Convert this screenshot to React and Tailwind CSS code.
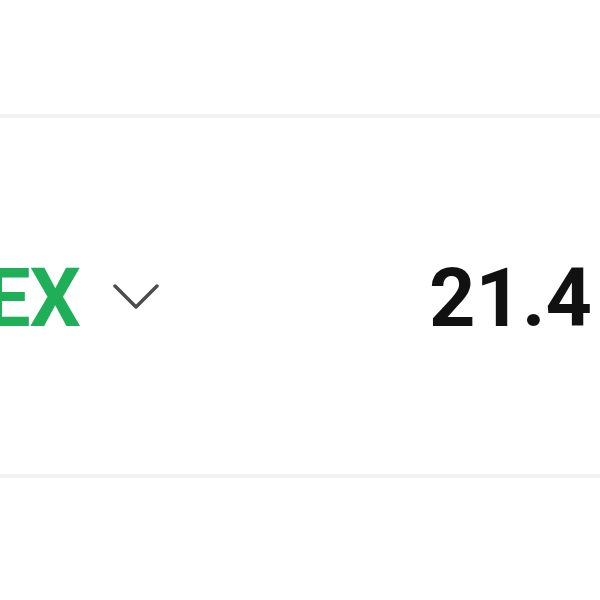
import React from 'react';

export default function App() {
  return (
    <div className="w-[600px] h-[600px] overflow-hidden bg-white flex flex-col" style={{ fontFamily: 'Roboto, "Liberation Sans", sans-serif' }}>
      {/* Haut */}
      <div className="h-[114px] shrink-0" />
      <div className="h-[4px] shrink-0 bg-[#f2f2f2]" />

      {/* Ligne indice */}
      <div className="h-[356px] shrink-0 flex items-center pt-[4px]">
        <div className="w-[80px] shrink-0 flex justify-end">
          <span className="whitespace-nowrap text-[81px] font-bold leading-none text-[#1eaf58] tracking-[-1px]">INDEX</span>
        </div>
        <svg className="ml-[33px] shrink-0 -mt-[4px]" width="46" height="28" viewBox="0 0 46 28" fill="none">
          <path d="M2 4 L23 25 L44 4" stroke="#4d4d4d" strokeWidth="3.5" strokeLinecap="round" strokeLinejoin="round" />
        </svg>
        <span className="ml-[270px] shrink-0 whitespace-nowrap text-[81px] font-bold leading-none text-[#111]">21.4</span>
      </div>

      <div className="h-[4px] shrink-0 bg-[#f2f2f2]" />
      <div className="flex-1" />
    </div>
  );
}
